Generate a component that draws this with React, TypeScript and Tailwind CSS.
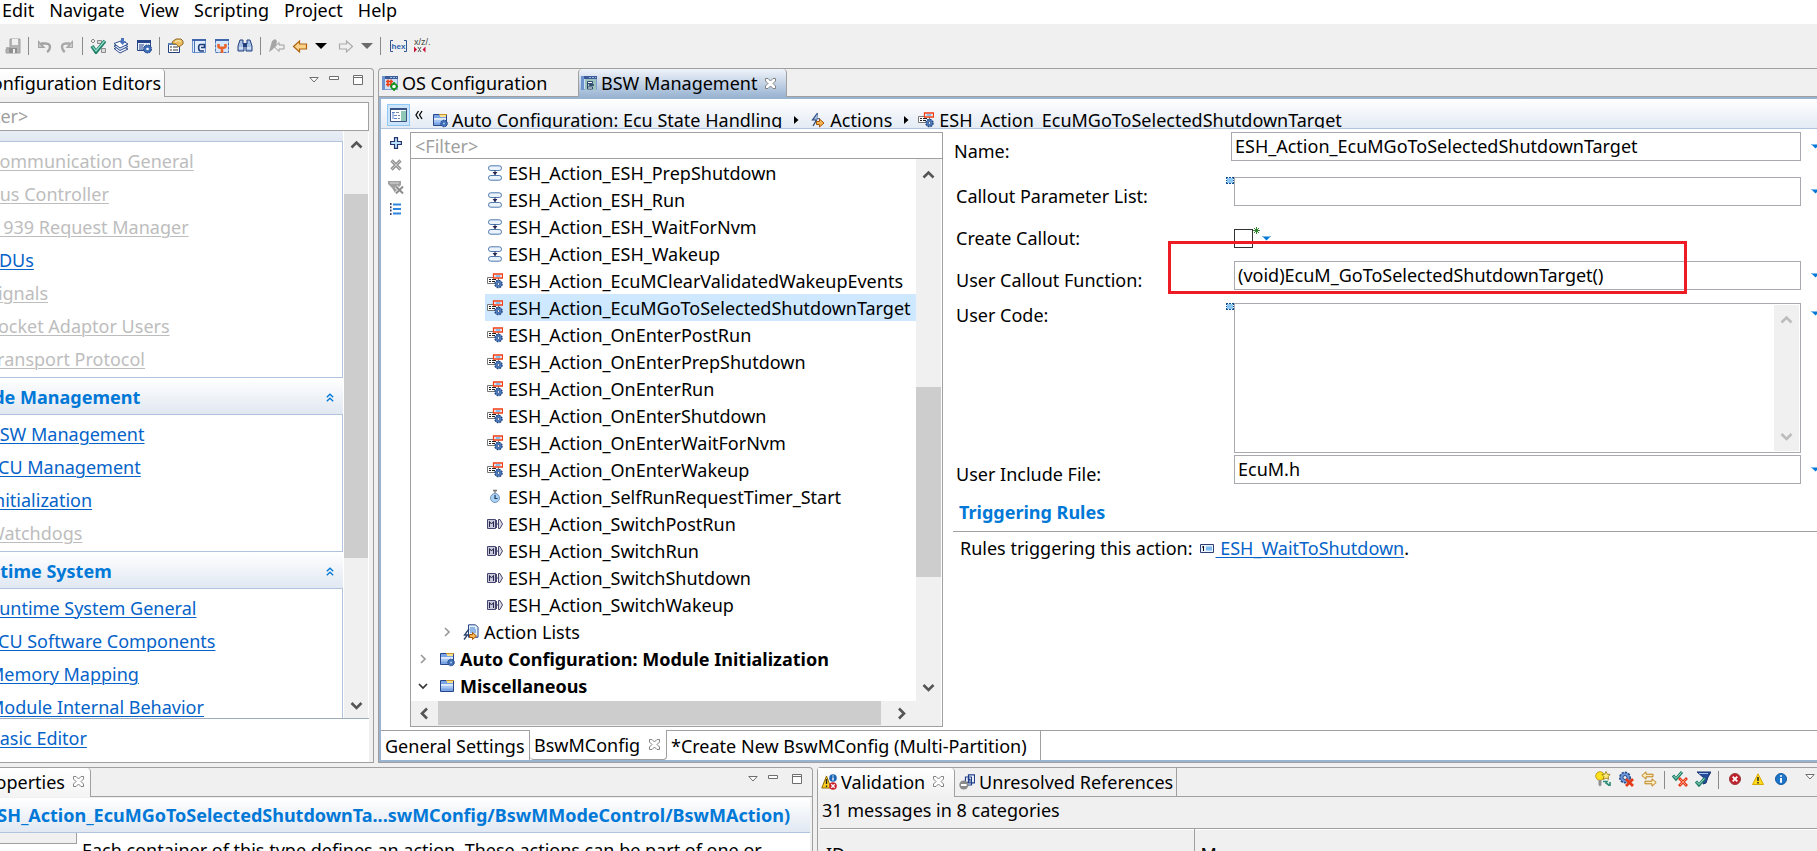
import type { ReactNode } from "react";

type IconProps = { className?: string };

function Svg({ children, className = "", w = 16, h = 16 }: { children: ReactNode; className?: string; w?: number; h?: number }) {
  return (
    <svg width={w} height={h} viewBox={`0 0 ${w} ${h}`} fill="none" className={"shrink-0 " + className} aria-hidden="true">
      {children}
    </svg>
  );
}

/* ---------- toolbar icons ---------- */

const SaveIcon = () => (
  <Svg>
    <path d="M5 1h10v14H1V9h4z" fill="#b4b4b4" />
    <path d="M5 1h10v14H1v-4h4z" stroke="#a0a0a0" />
    <path d="M7 1h6v6H7z" fill="#f0f0f0" />
    <path d="M4 10h8v5H4z" fill="#8f8f8f" />
    <path d="M8 11h2v4H8z" fill="#f0f0f0" />
  </Svg>
);

const UndoIcon = () => (
  <Svg>
    <path d="M5 5.500h5c4 0 4.500 3 3.500 5.500-.6 1.400-1.500 2.500-2.500 3" stroke="#a3a3a3" strokeWidth="2.400" />
    <path d="M2 2v8h7.500z" fill="#a3a3a3" />
    <path d="M3 5v4h3z" fill="#c9c9c9" />
  </Svg>
);

const RedoIcon = () => (
  <Svg>
    <path d="M11 5.500H6.500C3 5.500 2.500 8.500 3.500 11c.5 1.400 1.300 2.300 2.300 3" stroke="#a9a9a9" strokeWidth="2.400" />
    <path d="M14 2v8H6.500z" fill="#a9a9a9" />
    <path d="M13 5v4h-3z" fill="#cdcdcd" />
  </Svg>
);

const ValidateIcon = () => (
  <Svg>
    <path d="M3 1l2 2-2 2-2-2z" stroke="#888" fill="#eee" />
    <path d="M7.500 2.500h4v3h-4zM11.500 10.500h4v4h-4z" stroke="#8a8a8a" fill="#ddd" />
    <path d="M2 8l4 6 9-11" stroke="#1f7d68" strokeWidth="3.600" />
    <path d="M2.500 8.500l3.500 4.500 8.500-10" stroke="#8fe0c8" strokeWidth="1.200" />
  </Svg>
);

const LayersIcon = () => (
  <Svg>
    <path d="M1 10.500l6 4.500 8-4-6-3z" fill="#fff" stroke="#2b4a8b" />
    <path d="M1 8l6 4.500 8-4-6-3z" fill="#dbe6f7" stroke="#2b4a8b" />
    <path d="M1 5.500L7 10l8-4-6-3.500z" fill="#fff" stroke="#2b4a8b" />
    <path d="M8 0l3 0 0 3 2 0-3.500 4L6 3h2z" fill="#4b74bd" />
  </Svg>
);

const GenerateIcon = () => (
  <Svg>
    <path d="M1.500 2.500h13v10h-13z" fill="#e9f1fb" stroke="#27468a" />
    <path d="M1 2h14v3H1z" fill="#27468a" />
    <path d="M3 7h5M3 9h4M3 11h4" stroke="#27468a" />
    <circle cx="11.500" cy="11" r="4" fill="#3f6fb8" stroke="#1c3d7a" strokeDasharray="1.800 .9" />
    <circle cx="11.500" cy="11" r="1.300" fill="#fff" />
  </Svg>
);

const PropertiesIcon = () => (
  <Svg w={17}>
    <path d="M1.500 5.500h11v9h-11z" fill="#fff" stroke="#1f3f7a" />
    <path d="M1 5h12v2H1z" fill="#5f7fb8" />
    <path d="M3 9h2M3 12h2M6 9h5M6 12h5" stroke="#333" />
    <path d="M5 4l4-3h5l2 2v3l-4 3-3-3H6z" fill="#e9bd5e" stroke="#8f6a2a" />
    <path d="M8 4l3-1.500 3 1" stroke="#fff1c4" />
  </Svg>
);

const WindowRefreshIcon = () => (
  <Svg>
    <path d="M1.500 1.500h13v13h-13z" fill="#e3eefc" stroke="#6f93cf" />
    <path d="M1 1h14v2H1z" fill="#3f66ad" />
    <path d="M3.500 3v12" stroke="#4a72b8" />
    <path d="M14 6.500H9.500C7 6.500 7 13 9.500 13H13M10 9.500h3.500V6" stroke="#1f3f7a" strokeWidth="1.600" />
  </Svg>
);

const WindowToolIcon = () => (
  <Svg>
    <path d="M1.500 1.500h13v13h-13z" fill="#d6e6fb" stroke="#4a72b8" strokeDasharray="3 1" />
    <path d="M1 1h14v2H1z" fill="#3f66ad" />
    <path d="M4.500 6v2.500c0 2 7 2 7 0V6M8 10v5" stroke="#e8622a" strokeWidth="2.600" />
  </Svg>
);

const BinocularsIcon = () => (
  <Svg>
    <path d="M3 2h3v4l1 1v6H1V8zM10 2h3l2 6v5H9V7l1-1z" fill="#a8c0e6" stroke="#223f7c" />
    <path d="M6 5h4v4H6z" fill="#223f7c" />
    <path d="M2 10h4M10 10h4" stroke="#fff" />
  </Svg>
);

const LastEditIcon = () => (
  <Svg w={17}>
    <path d="M1 14L4 3l3-2 2 2-1 5-4 4z" fill="#a5a5a5" />
    <path d="M6.500 9l4.500-4.500v2.500h5v4h-5v2.500z" fill="#f0f0f0" stroke="#9c9c9c" />
  </Svg>
);

const BackIcon = () => (
  <Svg>
    <path d="M1.500 8.500L7.500 3v3h7v5h-7v3z" fill="#fbd28a" stroke="#b0620e" strokeWidth="1.200" />
  </Svg>
);

const ForwardIcon = () => (
  <Svg>
    <path d="M14.500 8.500L8.500 3v3h-7v5h7v3z" fill="#f0f0f0" stroke="#ababab" strokeWidth="1.200" />
  </Svg>
);

const CaretDown = ({ className = "" }: IconProps) => (
  <Svg w={12} h={6} className={className}>
    <path d="M0 0h12L6 6z" fill="currentColor" />
  </Svg>
);

const HexIcon = () => (
  <Svg w={17}>
    <path d="M3 2.500H.5v11H3M14 2.500h2.500v11H14" stroke="#33558f" />
    <text x="8.500" y="11" textAnchor="middle" fontSize="8" fontWeight="700" fontFamily="Liberation Sans, sans-serif" fill="#2e62ab">hex</text>
  </Svg>
);

const ShortNameIcon = () => (
  <Svg w={17}>
    <text x="0" y="7" fontSize="9" fontFamily="Liberation Sans, sans-serif" fill="#444">x/z/..</text>
    <path d="M0 8.500v6l3-3zM11.500 8.500v6l-3-3z" fill="#d0103a" />
    <path d="M4 9l3 5M7 9l-3 5" stroke="#555" />
  </Svg>
);

/* ---------- window chrome icons ---------- */

const ViewMenuIcon = () => (
  <Svg w={10} h={6}>
    <path d="M.8.500h8.400L5 5z" fill="#fff" stroke="#6e6e6e" />
  </Svg>
);
const MinimizeIcon = () => (
  <Svg w={10} h={4}>
    <path d="M.5.500h9v3h-9z" fill="#fff" stroke="#6e6e6e" />
  </Svg>
);
const MaximizeIcon = () => (
  <Svg w={10} h={10}>
    <path d="M.5.500h9v9h-9zM0 2.500h10" fill="#fff" stroke="#6e6e6e" />
  </Svg>
);
const CloseX = () => (
  <Svg w={11} h={11}>
    <path
      d="M.5.500h2.500l2.500 2.500L8 .5h2.500V3L8 5.500 10.500 8v2.500H8L5.500 8 3 10.500H.5V8L3 5.500.5 3z"
      fill="#fff"
      stroke="#777"
      strokeWidth=".9"
    />
  </Svg>
);

/* ---------- editor icons ---------- */

const OsIcon = () => (
  <Svg>
    <path d="M.5 1.500h15v13H.5z" fill="#cfdff5" stroke="#7f9fd2" />
    <path d="M0 1h16v3H0z" fill="#3b5b98" />
    <path d="M8 2.500h7" stroke="#9db9e6" strokeDasharray="2 1" />
    <path d="M0 1h3v14H0z" fill="#6f93cf" />
    <path d="M6 4.500v7M9 4.500v7M4 6.500h7M4 9.500h7" stroke="#f0390f" strokeWidth="1.500" />
    <circle cx="12" cy="11.500" r="2.600" stroke="#13931a" strokeWidth="1.600" fill="#fff" />
    <path d="M12 7v2M12 14v2M8 11.500h2M14.500 11.500h1.500" stroke="#13931a" strokeWidth="1.600" />
  </Svg>
);

const BswIcon = () => (
  <Svg>
    <path d="M.5 1.500h15v13H.5z" fill="#cfdff5" stroke="#7f9fd2" />
    <path d="M0 1h16v3H0z" fill="#3b5b98" />
    <path d="M8 2.500h7" stroke="#9db9e6" strokeDasharray="2 1" />
    <path d="M0 1h3v14H0z" fill="#6f93cf" />
    <path d="M4 4h11v11H4z" fill="#9cc3bd" />
    <path d="M6.500 6.500h5v2h-5zM8.500 9.500h4v1h-4zM6.500 12h5v2h-5zM6.500 8v5" fill="#fff" stroke="#203a63" strokeWidth=".9" />
  </Svg>
);

const OutlineIcon = () => (
  <Svg w={17} h={16}>
    <path d="M.5 1.500h16v13H.5z" fill="#fff" stroke="#3a5488" />
    <path d="M0 1h17v2H0z" fill="#3a5488" />
    <path d="M11 4h5v10h-5z" fill="#8fc9b5" />
    <path d="M2 5.500h3M4 8.500h3M4 11.500h3M3 6v6" stroke="#5d86c9" />
    <path d="M6 5.500h3M8 8.500h2M8 11.500h2" stroke="#7a8aa8" />
  </Svg>
);

const FolderIcon = ({ gear = true }: { gear?: boolean }) => (
  <Svg>
    <path d="M1.500 2.500h13v11h-13z" fill="#7ba4e4" stroke="#27468a" />
    <path d="M8 3h6v2H8z" fill="#fbe08a" />
    <path d="M7 2.500h8" stroke="#c9952a" />
    <path d="M2 6h12v2.500H2z" fill="#dbe9fb" />
    <path d="M2 8.500h12v2H2z" fill="#a5c5f2" />
    {gear && <circle cx="12" cy="11.500" r="3.300" fill="#3f6fb8" stroke="#1c3d7a" strokeDasharray="1.500 .8" />}
    {gear && <circle cx="12" cy="11.500" r="1" fill="#a9c8f0" />}
  </Svg>
);

const ActionsIcon = () => (
  <Svg w={14}>
    <path d="M6.500 1L1.500 8h4L2 14" stroke="#27406e" strokeWidth="1.200" />
    <path d="M2.500 7.500l4-6-.5 5h3z" fill="#c9dbf3" stroke="#3a5c96" strokeWidth=".7" />
    <path d="M5.500 9.500H8.500V7l4.500 4-4.500 4v-2.500H5.500z" fill="#f9b552" stroke="#a2560b" />
  </Svg>
);

const CalloutIcon = () => (
  <Svg>
    <path d="M.5 4.500h11v6H.5z" fill="#fff" stroke="#777" />
    <path d="M2 6.500h2M5 6.500h4M2 8.500h2M5 8.500h3" stroke="#222" />
    <path d="M6.500 1h9v4h-9z" fill="#fff" stroke="#f03c14" strokeWidth="1.300" />
    <path d="M8.500 3h5" stroke="#1c7fd6" />
    <circle cx="11.500" cy="11" r="3.600" fill="#4f7fc4" stroke="#24467f" strokeDasharray="1.800 1" strokeWidth="1.400" />
    <circle cx="11.500" cy="11" r="1.300" fill="#fff" stroke="#24467f" strokeWidth=".8" />
  </Svg>
);

const FlowIcon = () => (
  <Svg>
    <rect x="1.500" y=".8" width="13" height="4.700" rx="2.300" fill="#eaf3fc" stroke="#4f79ad" />
    <rect x="1.500" y="10.500" width="13" height="4.700" rx="2.300" fill="#eaf3fc" stroke="#4f79ad" />
    <path d="M8 5.500V10" stroke="#23234f" />
    <path d="M5.500 7h5L8 10z" fill="#23234f" />
  </Svg>
);

const TimerIcon = () => (
  <Svg>
    <path d="M6 1.500h4M8 2v2" stroke="#777" strokeWidth="1.300" />
    <circle cx="8" cy="9" r="4.500" fill="#a9d2f5" stroke="#7795b8" />
    <path d="M8 6v3.500h2.500" stroke="#1c3457" strokeWidth="1.200" />
  </Svg>
);

const ModeIcon = () => (
  <Svg>
    <path d="M.5 3.500h8v9h-8z" fill="#c9c9dc" stroke="#45456e" />
    <path d="M2.500 11V5.500l2 2.500 2-2.500V11" stroke="#26264d" />
    <path d="M11.500 3.500h1.500l2.500 4.500-2.500 4.500h-1.500z" fill="#dcdce8" stroke="#45456e" />
    <path d="M9 8h2.500M9.500 4v8" stroke="#45456e" />
  </Svg>
);

const ActionListIcon = () => (
  <Svg>
    <path d="M5.500.8h7l2.500 2.500v10H5.500z" fill="#e4effb" stroke="#27468a" />
    <path d="M7 4h5M7 6h6M7 8h6" stroke="#3d7fd0" />
    <path d="M6 5L1.500 11h3L1 15.500" stroke="#27406e" strokeWidth="1.300" />
    <path d="M6.500 10.500H9.500V8.500l4 3.500-4 3.500v-2h-3z" fill="#f9b552" stroke="#a2560b" />
  </Svg>
);

const RuleIcon = () => (
  <Svg w={14} h={9}>
    <path d="M.5.500h13v8H.5z" fill="#eaf3fc" stroke="#2f3f73" />
    <path d="M3.500 2v5M2 3h1" stroke="#111" />
    <path d="M6 2.500h6v4H6z" fill="#7dbcf0" />
  </Svg>
);

const AddIcon = () => (
  <Svg w={12} h={12}>
    <path d="M4.500.6h3v3.900h3.900v3H7.500v3.900h-3V7.500H.6v-3h3.900z" fill="#b9e2fb" stroke="#27346e" strokeWidth="1.200" />
  </Svg>
);
const DeleteIcon = () => (
  <Svg w={12} h={12}>
    <path d="M1.500 1.500l9 9M10.500 1.500l-9 9" stroke="#979797" strokeWidth="3.200" />
    <path d="M2 2l8 8M10 2l-8 8" stroke="#cfcfcf" strokeWidth=".9" />
  </Svg>
);
const FilterOffIcon = () => (
  <Svg w={16} h={13}>
    <path d="M0 0h13v4l-3 3v5H7L4 7 0 3z" fill="#a0a0a0" />
    <path d="M2 2h9" stroke="#ddd" />
    <path d="M8 5.500l7 7M15 5.500l-7 7" stroke="#fff" strokeWidth="3.400" />
    <path d="M8 5.500l7 7M15 5.500l-7 7" stroke="#8d8d8d" strokeWidth="2" />
  </Svg>
);
const ListIcon = () => (
  <Svg w={11} h={12}>
    <path d="M3 1.500h8M3 6h8M3 10.500h8" stroke="#2e86de" strokeWidth="2" />
    <path d="M.8 0v12" stroke="#2c2c5e" strokeDasharray="2 1.300" strokeWidth="1.400" />
  </Svg>
);

const FieldCaret = ({ className = "" }: IconProps) => (
  <Svg w={9} h={5} className={className}>
    <path d="M.5.500h8L4.500 4.500z" fill="#0078d7" />
    <path d="M0 .5h9" stroke="#7db9ea" />
  </Svg>
);

const InfoMarker = () => (
  <Svg w={8} h={7}>
    <path d="M1 1h6v5H1z" fill="#8cc6f2" />
    <path d="M0 .5h2M3 .5h2M6 .5h2M0 6.500h2M3 6.500h2M6 6.500h2M.5 0v2M.5 3v1M.5 5v2M7.500 0v2M7.500 3v1M7.500 5v2" stroke="#0f4c8c" />
  </Svg>
);

/* ---------- validation icons ---------- */

const ValidationIcon = () => (
  <Svg>
    <path d="M5.500 2L10 14H.8z" fill="#ffd21f" stroke="#8c6a00" />
    <path d="M5.500 5v5M5.500 11.500v1.500" stroke="#222" strokeWidth="1.400" />
    <circle cx="12" cy="4" r="3.800" fill="#1c66b5" />
    <path d="M12 1.500v1M12 3.500v3" stroke="#fff" strokeWidth="1.400" />
    <circle cx="12" cy="12" r="3.800" fill="#c8202b" />
    <path d="M10.300 10.300l3.400 3.400M13.700 10.300l-3.400 3.400" stroke="#fff" strokeWidth="1.300" />
  </Svg>
);
const UnresolvedIcon = () => (
  <Svg>
    <path d="M9.500.800h6v8h-6zM6.500 3h6v8h-6z" fill="#fff" stroke="#1f3f8a" strokeWidth="1.200" />
    <path d="M8 9l3-4M8.500 5h2.500v3" stroke="#1f3f8a" />
    <circle cx="4.800" cy="11" r="4.500" fill="#8a8a8a" />
    <path d="M2 11h5.600" stroke="#fff" strokeWidth="2" />
  </Svg>
);
const BulbIcon = () => (
  <Svg>
    <circle cx="5" cy="5" r="4.300" fill="#ffe21f" stroke="#b08a00" strokeWidth=".8" />
    <path d="M3.500 9h3v5l-1.500 1.500L3.500 14z" fill="#8f8f8f" />
    <path d="M11 .5l1.300 2.700 2.900.3-2.100 2 .5 2.900L11 7 8.300 8.400l.5-2.900-2-2 2.900-.3z" fill="#ffe97a" stroke="#96760f" strokeWidth=".8" />
    <path d="M8 10.500h4l-1 1.500 3.500 2.500M15 15v-4" stroke="#2d8c78" strokeWidth="1.600" />
  </Svg>
);
const GearErrorIcon = () => (
  <Svg>
    <circle cx="7" cy="6.500" r="5.200" fill="#6c95d6" stroke="#274a87" strokeWidth="1.600" strokeDasharray="2.200 1.200" />
    <circle cx="7" cy="6.500" r="2" fill="#f0f0f0" stroke="#274a87" />
    <path d="M8 8l7 7M15 8l-7 7" stroke="#e43a17" strokeWidth="2.800" />
  </Svg>
);
const SwapIcon = () => (
  <Svg>
    <path d="M.8 4.500L5 .8v2.400h7v2.600H5v2.400zM15.200 11.500L11 7.800v2.400H4v2.600h7v2.400z" fill="#fdebc0" stroke="#bd8119" />
  </Svg>
);
const CheckErrorIcon = () => (
  <Svg>
    <path d="M1 4.500l3 3.500 6-7" stroke="#1f7d68" strokeWidth="3" />
    <path d="M1.500 5l2.500 2.500 5.500-6" stroke="#a6ebd6" />
    <path d="M7 7l8 8M15 7l-8 8" stroke="#e43a17" strokeWidth="2.800" />
    <path d="M8 8l6 6M14 8l-6 6" stroke="#ffb199" strokeWidth=".8" />
  </Svg>
);
const FilterCheckIcon = () => (
  <Svg>
    <path d="M2 1h14l-3 5-2 6-3 1 1-6z" fill="#254c9c" stroke="#16336f" />
    <path d="M4 2.500h9" stroke="#a6c4f2" />
    <path d="M1 10.500l3 3.500 6-7" stroke="#1f7d68" strokeWidth="3" />
    <path d="M1.500 11l2.500 2.500 5.500-6" stroke="#a6ebd6" />
  </Svg>
);
const ErrorIcon = () => (
  <Svg w={12} h={12}>
    <circle cx="6" cy="6" r="5.500" fill="#c0202c" stroke="#9c3a40" />
    <path d="M3.700 3.700l4.600 4.600M8.300 3.700L3.700 8.300" stroke="#fff" strokeWidth="1.900" />
  </Svg>
);
const WarningIcon = () => (
  <Svg w={12} h={12}>
    <path d="M6 .8l5.500 10.700H.5z" fill="#ffdc1e" stroke="#d8a900" />
    <path d="M6 4v4M6 9v1.500" stroke="#222" strokeWidth="1.500" />
  </Svg>
);
const InfoIcon = () => (
  <Svg w={12} h={12}>
    <circle cx="6" cy="6" r="5.500" fill="#1c75c8" stroke="#155a9c" />
    <path d="M6 2.300v1.500M6 5v4.700" stroke="#fff" strokeWidth="1.900" />
  </Svg>
);

/* ---------- shared pieces ---------- */

const Chevron = ({ dir, className = "" }: { dir: "up" | "down" | "left" | "right"; className?: string }) => {
  const d = {
    up: "M1.500 9.500L6.500 4.500l5 5",
    down: "M1.500 4L6.500 9l5-5",
    left: "M9 1.500L4 6.500l5 5",
    right: "M4 1.500L9 6.500l-5 5",
  }[dir];
  return (
    <Svg w={13} h={13} className={className}>
      <path d={d} stroke="currentColor" strokeWidth="2.600" />
    </Svg>
  );
};

const TreeChevron = ({ open }: { open: boolean }) => (
  <Svg w={10} h={10} className={open ? "text-[#333]" : "text-[#9a9a9a]"}>
    <path d={open ? "M1 3l4 4 4-4" : "M3 1l4 4-4 4"} stroke="currentColor" strokeWidth="1.700" />
  </Svg>
);

const CollapseIcon = () => (
  <Svg w={8} h={9}>
    <path d="M.8 4.300L4 1.200l3.200 3.100M.8 8.300L4 5.200l3.200 3.100" stroke="#0078d7" strokeWidth="1.300" />
  </Svg>
);

const Divider = () => <span className="h-[18px] w-px bg-[#8a8a8a]" />;

function IconButton({ label, children, className = "" }: { label: string; children: ReactNode; className?: string }) {
  return (
    <button type="button" aria-label={label} className={"flex shrink-0 items-center justify-center " + className}>
      {children}
    </button>
  );
}

function WindowButtons() {
  return (
    <div className="flex items-start gap-[10px] pt-[5px] pr-[10px]">
      <IconButton label="View menu" className="h-3"><ViewMenuIcon /></IconButton>
      <IconButton label="Minimize" className="h-2"><MinimizeIcon /></IconButton>
      <IconButton label="Maximize" className="ml-1 h-3"><MaximizeIcon /></IconButton>
    </div>
  );
}

/* ---------- menu and toolbar ---------- */

function MenuBar() {
  return (
    <nav className="flex h-6 items-start gap-[15px] bg-white pl-[2px] leading-5">
      {["Edit", "Navigate", "View", "Scripting", "Project", "Help"].map((m) => (
        <button key={m} type="button">{m}</button>
      ))}
    </nav>
  );
}

function ToolBar() {
  return (
    <div className="flex h-[44px] items-center gap-[7px] pl-[5px]">
      <IconButton label="Save"><SaveIcon /></IconButton>
      <Divider />
      <IconButton label="Undo"><UndoIcon /></IconButton>
      <IconButton label="Redo"><RedoIcon /></IconButton>
      <Divider />
      <IconButton label="Validate"><ValidateIcon /></IconButton>
      <IconButton label="Import"><LayersIcon /></IconButton>
      <IconButton label="Generate"><GenerateIcon /></IconButton>
      <Divider />
      <IconButton label="Properties"><PropertiesIcon /></IconButton>
      <IconButton label="Refresh window"><WindowRefreshIcon /></IconButton>
      <IconButton label="Window tools"><WindowToolIcon /></IconButton>
      <IconButton label="Find"><BinocularsIcon /></IconButton>
      <Divider />
      <IconButton label="Last edit location"><LastEditIcon /></IconButton>
      <IconButton label="Back"><BackIcon /></IconButton>
      <IconButton label="Back history"><CaretDown className="text-black" /></IconButton>
      <IconButton label="Forward" className="ml-1"><ForwardIcon /></IconButton>
      <IconButton label="Forward history"><CaretDown className="text-[#6b6b6b]" /></IconButton>
      <Divider />
      <IconButton label="Hexadecimal display" className="ml-[2px]"><HexIcon /></IconButton>
      <IconButton label="Short names"><ShortNameIcon /></IconButton>
    </div>
  );
}

/* ---------- configuration editors ---------- */

type NavItem = { label: string; off?: boolean };
const sections: { title: string; items: NavItem[] }[] = [
  {
    title: "Communication",
    items: [
      { label: "Communication General", off: true },
      { label: "Bus Controller", off: true },
      { label: "J1939 Request Manager", off: true },
      { label: "PDUs" },
      { label: "Signals", off: true },
      { label: "Socket Adaptor Users", off: true },
      { label: "Transport Protocol", off: true },
    ],
  },
  {
    title: "Mode Management",
    items: [{ label: "BSW Management" }, { label: "ECU Management" }, { label: "Initialization" }, { label: "Watchdogs", off: true }],
  },
  {
    title: "Runtime System",
    items: [
      { label: "Runtime System General" },
      { label: "ECU Software Components" },
      { label: "Memory Mapping" },
      { label: "Module Internal Behavior" },
    ],
  },
];

function NavSection({ title, items }: { title: string; items: NavItem[] }) {
  return (
    <section>
      <h2 className="flex h-[37px] items-center justify-between border-b border-[#b0c4de] bg-linear-to-b from-white to-[#e1e8f2] pt-[2px] pr-[9px] font-bold text-[#0078d7]">
        <span className="-ml-[35px]">{title}</span>
        <button type="button" aria-label={"Collapse " + title}><CollapseIcon /></button>
      </h2>
      <ul className="border-r border-b border-[#b0c4de] pt-1">
        {items.map((i) => (
          <li key={i.label} className="-ml-[12px] h-[33px] leading-[31px]">
            <a
              href="#"
              className={i.off ? "text-[#bdbdbd] underline decoration-1 underline-offset-2" : "text-[#0563c9] underline decoration-1 underline-offset-2"}
            >
              {i.label}
            </a>
          </li>
        ))}
      </ul>
    </section>
  );
}

function ConfigurationEditors() {
  return (
    <section className="flex w-[374px] shrink-0 flex-col rounded-tr border-t border-r border-b border-[#a0a0a0]">
      <div className="flex h-7 items-stretch justify-between">
        <div className="flex w-[165px] items-center justify-end rounded-tr border-r border-[#a0a0a0] bg-linear-to-b from-white to-[#f4f4f4] pr-[3px]">
          <button type="button" className="whitespace-nowrap">Configuration Editors</button>
        </div>
        <div className="flex flex-1 justify-end border-b border-[#a0a0a0]"><WindowButtons /></div>
      </div>
      <div className="flex min-h-0 flex-1 flex-col pt-[5px] pr-1">
        <div className="flex h-[29px] shrink-0 overflow-hidden border-y border-r border-[#a0a0a0] bg-white">
          <input aria-label="Filter" placeholder="<Filter>" className="-ml-[35px] w-full pb-px outline-none placeholder:text-[#a0a0a0]" />
        </div>
        <div className="flex min-h-0 flex-1 border-b border-[#9eabbb] bg-white pr-px">
          <div className="flex min-h-0 flex-1 flex-col justify-start overflow-hidden">
            <div className="-mt-[26px]">
              {sections.map((s) => <NavSection key={s.title} {...s} />)}
            </div>
          </div>
          <div className="ml-px flex w-6 flex-col bg-[#f0f0f0] text-[#555]">
            <IconButton label="Scroll up" className="h-[26px]"><Chevron dir="up" /></IconButton>
            <div className="flex flex-1 flex-col">
              <div className="flex-[37]" />
              <div className="flex-[365] bg-[#cdcdcd]" />
              <div className="flex-[135]" />
            </div>
            <IconButton label="Scroll down" className="h-[26px]"><Chevron dir="down" /></IconButton>
          </div>
        </div>
        <div className="h-[43px] shrink-0 bg-white pt-[3px] leading-[33px]">
          <a href="#" className="-ml-[12px] text-[#0563c9] underline decoration-1 underline-offset-2">Basic Editor</a>
        </div>
      </div>
    </section>
  );
}

/* ---------- BSW editor: tree ---------- */

type Leaf = { label: string; icon: "flow" | "callout" | "timer" | "mode"; selected?: boolean };
const leaves: Leaf[] = [
  { label: "ESH_Action_ESH_PrepShutdown", icon: "flow" },
  { label: "ESH_Action_ESH_Run", icon: "flow" },
  { label: "ESH_Action_ESH_WaitForNvm", icon: "flow" },
  { label: "ESH_Action_ESH_Wakeup", icon: "flow" },
  { label: "ESH_Action_EcuMClearValidatedWakeupEvents", icon: "callout" },
  { label: "ESH_Action_EcuMGoToSelectedShutdownTarget", icon: "callout", selected: true },
  { label: "ESH_Action_OnEnterPostRun", icon: "callout" },
  { label: "ESH_Action_OnEnterPrepShutdown", icon: "callout" },
  { label: "ESH_Action_OnEnterRun", icon: "callout" },
  { label: "ESH_Action_OnEnterShutdown", icon: "callout" },
  { label: "ESH_Action_OnEnterWaitForNvm", icon: "callout" },
  { label: "ESH_Action_OnEnterWakeup", icon: "callout" },
  { label: "ESH_Action_SelfRunRequestTimer_Start", icon: "timer" },
  { label: "ESH_Action_SwitchPostRun", icon: "mode" },
  { label: "ESH_Action_SwitchRun", icon: "mode" },
  { label: "ESH_Action_SwitchShutdown", icon: "mode" },
  { label: "ESH_Action_SwitchWakeup", icon: "mode" },
];
const leafIcons = { flow: <FlowIcon />, callout: <CalloutIcon />, timer: <TimerIcon />, mode: <ModeIcon /> };

function ActionTree() {
  return (
    <div className="flex w-[533px] shrink-0 flex-col border border-[#a0a0a0]">
      <input
        aria-label="Filter actions"
        placeholder="<Filter>"
        className="h-[26px] w-full shrink-0 border-b border-[#a0a0a0] bg-white px-1 outline-none placeholder:text-[#a0a0a0]"
      />
      <div className="flex min-h-0 flex-1 pr-px">
        <div className="flex min-w-0 flex-1 flex-col">
          <ul role="tree" aria-label="Actions" className="min-h-0 flex-1 overflow-hidden whitespace-nowrap">
            {leaves.map((l) => (
              <li
                key={l.label}
                role="treeitem"
                aria-selected={!!l.selected}
                className={
                  l.selected
                    ? "ml-[74px] flex h-[27px] items-center gap-[5px] overflow-hidden bg-[#cde8ff] pl-[2px]"
                    : "ml-[74px] flex h-[27px] items-center gap-[5px] overflow-hidden pl-[2px]"
                }
              >
                {leafIcons[l.icon]}
                {l.label}
              </li>
            ))}
            <li role="treeitem" aria-expanded="false" className="ml-[31px] flex h-[27px] items-center">
              <TreeChevron open={false} />
              <span className="ml-[11px] flex items-center gap-[5px]"><ActionListIcon />Action Lists</span>
            </li>
            <li role="treeitem" aria-expanded="false" className="ml-[7px] flex h-[27px] items-center font-bold">
              <TreeChevron open={false} />
              <span className="ml-[11px] flex items-center gap-[5px]"><FolderIcon />Auto Configuration: Module Initialization</span>
            </li>
            <li role="treeitem" aria-expanded="true" className="ml-[7px] flex h-[27px] items-center font-bold">
              <TreeChevron open />
              <span className="ml-[11px] flex items-center gap-[5px]"><FolderIcon gear={false} />Miscellaneous</span>
            </li>
          </ul>
          <div className="flex h-[25px] shrink-0 bg-[#f0f0f0] pb-px text-[#555]">
            <IconButton label="Scroll left" className="w-[27px]"><Chevron dir="left" /></IconButton>
            <div className="flex-1 bg-[#cdcdcd]" />
            <IconButton label="Scroll right" className="w-[35px] pl-[6px]"><Chevron dir="right" /></IconButton>
          </div>
        </div>
        <div className="flex w-[25px] flex-col bg-[#f0f0f0] pb-[25px] text-[#555]">
          <IconButton label="Scroll up" className="h-[28px] pt-[2px]"><Chevron dir="up" /></IconButton>
          <div className="flex flex-1 flex-col">
            <div className="flex-[200]" />
            <div className="flex-[191] bg-[#cdcdcd]" />
            <div className="flex-[97]" />
          </div>
          <IconButton label="Scroll down" className="h-[27px]"><Chevron dir="down" /></IconButton>
        </div>
      </div>
    </div>
  );
}

/* ---------- BSW editor: form ---------- */

const inputClass = "h-[29px] min-w-0 flex-1 border border-[#a9a9b0] bg-white px-[3px] pb-[2px] outline-none";

function FieldRow({ id, label, marker, wide, children, className }: { id: string; label: string; marker?: boolean; wide?: boolean; children: ReactNode; className: string }) {
  return (
    <div className={"flex items-start " + className}>
      <label htmlFor={id} className={wide ? "w-[277px] shrink-0 pt-[7px]" : "ml-[2px] w-[278px] shrink-0 pt-[7px]"}>
        {label}
      </label>
      <div className="relative flex min-w-0 flex-1">
        {marker && <span className="absolute top-0 -left-2"><InfoMarker /></span>}
        {children}
      </div>
      <button type="button" aria-label={label + " menu"} className="w-4 shrink-0 overflow-hidden pt-3 pl-[10px]">
        <FieldCaret />
      </button>
    </div>
  );
}

function ActionForm() {
  return (
    <form className="relative min-w-0 flex-1 pl-[11px]">
      <FieldRow id="name" label="Name:" wide className="mb-4 h-[29px]">
        <input id="name" className={inputClass} defaultValue="ESH_Action_EcuMGoToSelectedShutdownTarget" />
      </FieldRow>
      <FieldRow id="params" label="Callout Parameter List:" marker className="mb-5 h-[29px]">
        <input id="params" className={inputClass} />
      </FieldRow>
      <div className="mb-[11px] ml-[2px] flex h-6 items-center">
        <label htmlFor="create" className="w-[278px] shrink-0">Create Callout:</label>
        <input id="create" type="checkbox" className="size-[19px] shrink-0 appearance-none border border-[#333] bg-white" />
        <span className="h-full w-[8px] text-[#1a7a1a]">
          <Svg w={7} h={9}><path d="M3.500 1v7M0 4.500h7M1 2l5 5M6 2L1 7" stroke="currentColor" strokeWidth=".9" /></Svg>
        </span>
        <button type="button" aria-label="Create Callout menu" className="ml-px"><FieldCaret /></button>
      </div>
      <FieldRow id="fn" label="User Callout Function:" className="mb-[13px] h-[29px]">
        <input id="fn" className={inputClass} defaultValue="(void)EcuM_GoToSelectedShutdownTarget()" />
      </FieldRow>
      <div className="mb-[2px] ml-[2px] flex h-[150px] items-start">
        <label htmlFor="code" className="w-[278px] shrink-0">User Code:</label>
        <div className="relative flex h-full min-w-0 flex-1 border border-[#a9a9b0] p-px">
          <span className="absolute -top-px -left-[9px]"><InfoMarker /></span>
          <textarea id="code" className="min-w-0 flex-1 resize-none outline-none" />
          <div className="flex w-[25px] flex-col justify-between bg-[#f0f0f0] py-2 text-[#bcbcbc]">
            <IconButton label="Scroll code up"><Chevron dir="up" /></IconButton>
            <IconButton label="Scroll code down"><Chevron dir="down" /></IconButton>
          </div>
        </div>
        <button type="button" aria-label="User Code menu" className="w-4 shrink-0 overflow-hidden pt-2 pl-[10px]"><FieldCaret /></button>
      </div>
      <FieldRow id="include" label="User Include File:" className="mb-4 h-[29px]">
        <input id="include" className={inputClass} defaultValue="EcuM.h" />
      </FieldRow>
      <h3 className="-ml-px border-b border-[#a0a0a0] pb-[7px] pl-[6px] font-bold text-[#0078d7]">Triggering Rules</h3>
      <p className="mt-1 flex items-center pl-[6px] whitespace-pre">
        Rules triggering this action:<span className="mr-[2px] ml-[7px]"><RuleIcon /></span>
        <a href="#" className="text-[#0563c9] underline decoration-1 underline-offset-2">{" ESH_WaitToShutdown"}</a>.
      </p>
      <div className="pointer-events-none absolute top-[109px] right-[130px] left-[225px] h-[53px] border-[3px] border-[#ed1c24]" />
    </form>
  );
}

function BswEditor() {
  return (
    <section className="flex min-w-0 flex-1 flex-col rounded-tl border-t border-b border-l border-[#a0a0a0]">
      <div className="flex h-7 items-stretch">
        <button type="button" className="flex w-[199px] items-center gap-[4px] border-b border-[#a0a0a0] pl-[3px]"><OsIcon />OS Configuration</button>
        <div className="flex w-[209px] items-center rounded-t border-x border-[#a0a0a0] bg-linear-to-b from-[#f0f4fa] to-[#9ab4d2] pl-[2px]">
          <button type="button" className="flex items-center gap-[4px]"><BswIcon />BSW Management</button>
          <IconButton label="Close BSW Management" className="ml-2"><CloseX /></IconButton>
        </div>
        <div className="flex-1 border-b border-[#a0a0a0]" />
      </div>
      <div className="flex min-h-0 flex-1 flex-col border-t-2 border-b-2 border-l-2 border-[#99b4d1] bg-white">
        <div className="flex h-[30px] shrink-0 items-end overflow-hidden border-b border-[#b0c4de] bg-linear-to-b from-white to-[#e4ebf4] pl-[6px]">
          <div className="flex items-center self-start pt-[5px]">
            <IconButton label="Toggle outline" className="h-[22px] w-[23px] border border-[#90c8f6] bg-[#cce4f9]"><OutlineIcon /></IconButton>
            <IconButton label="Show hidden levels" className="ml-[5px]">
              <Svg w={8} h={10}><path d="M3.500 1L1 5l2.500 4M7 1L4.500 5 7 9" stroke="#000" strokeWidth="1.300" /></Svg>
            </IconButton>
          </div>
          <nav aria-label="Breadcrumb" className="ml-[9px] flex h-6 items-center pt-[7px] whitespace-nowrap">
            <FolderIcon />
            <button type="button" className="ml-1">Auto Configuration: Ecu State Handling</button>
            <Svg w={5} h={8} className="mx-3"><path d="M0 0v8l4.500-4z" fill="#000" /></Svg>
            <ActionsIcon />
            <button type="button" className="ml-[5px]">Actions</button>
            <Svg w={5} h={8} className="mr-[9px] ml-3"><path d="M0 0v8l4.500-4z" fill="#000" /></Svg>
            <CalloutIcon />
            <button type="button" className="ml-[5px]">ESH_Action_EcuMGoToSelectedShutdownTarget</button>
          </nav>
        </div>
        <div className="flex min-h-0 flex-1 pt-[3px]">
          <div className="flex w-[29px] shrink-0 flex-col items-center gap-[10px] pt-[5px]">
            <IconButton label="Add" className="h-3"><AddIcon /></IconButton>
            <IconButton label="Delete" className="h-3"><DeleteIcon /></IconButton>
            <IconButton label="Clear filter" className="h-3"><FilterOffIcon /></IconButton>
            <IconButton label="Show list" className="h-3"><ListIcon /></IconButton>
          </div>
          <ActionTree />
          <ActionForm />
        </div>
        <div className="mt-[3px] flex h-[30px] shrink-0 items-stretch">
          <button type="button" className="w-[149px] border-t border-r border-[#a0a0a0] pl-1 text-left whitespace-nowrap">General Settings</button>
          <div className="flex w-[137px] items-center justify-between rounded-b border-r border-b border-[#a0a0a0] pr-[6px] pl-1">
            <button type="button">BswMConfig</button>
            <IconButton label="Close BswMConfig"><CloseX /></IconButton>
          </div>
          <button type="button" className="w-[374px] border-t border-r border-[#a0a0a0] pl-1 text-left whitespace-nowrap">*Create New BswMConfig (Multi-Partition)</button>
          <div className="flex-1 border-t border-[#a0a0a0]" />
        </div>
      </div>
    </section>
  );
}

/* ---------- bottom panels ---------- */

function PropertiesPanel() {
  return (
    <section className="flex w-[813px] shrink-0 flex-col rounded-tr border-t border-r border-[#a0a0a0]">
      <div className="flex h-[29px] shrink-0 items-stretch">
        <div className="flex w-[91px] items-center justify-end gap-2 rounded-tr border-r border-[#a0a0a0] bg-linear-to-b from-white to-[#f4f4f4] pr-[6px] pb-[2px]">
          <button type="button">Properties</button>
          <IconButton label="Close Properties"><CloseX /></IconButton>
        </div>
        <div className="flex flex-1 justify-end border-b border-[#a0a0a0]"><WindowButtons /></div>
      </div>
      <div className="mt-px mr-[2px] flex-1 bg-white">
        <h2 className="flex h-[35px] justify-end overflow-hidden border-b border-[#b0c4de] bg-linear-to-b from-white to-[#e1e8f2] pr-[20px] font-bold leading-[34px] whitespace-nowrap text-[#0078d7]">
          ESH_Action_EcuMGoToSelectedShutdownTa...swMConfig/BswMModeControl/BswMAction)
        </h2>
        <div className="flex">
          <div className="h-[11px] w-[77px] border-r border-b border-[#a0a0a0] bg-[#f0f0f0]" />
          <p className="pt-[5px] pl-[5px] whitespace-nowrap">Each container of this type defines an action. These actions can be part of one or</p>
        </div>
      </div>
    </section>
  );
}

function ValidationPanel() {
  return (
    <section className="flex min-w-0 flex-1 flex-col rounded-tl border-t border-l border-[#a0a0a0]">
      <div className="flex h-[29px] shrink-0 items-stretch">
        <div className="flex w-[137px] items-center rounded-tr border-r border-[#a0a0a0] bg-linear-to-b from-white to-[#f0f0f0] pb-[2px] pl-[3px]">
          <button type="button" className="flex items-center gap-[4px]"><ValidationIcon />Validation</button>
          <IconButton label="Close Validation" className="ml-2"><CloseX /></IconButton>
        </div>
        <button type="button" className="flex w-[222px] items-center gap-[4px] border-r border-b border-[#a0a0a0] pl-[4px] whitespace-nowrap">
          <UnresolvedIcon />Unresolved References
        </button>
        <div className="flex flex-1 items-start justify-end gap-[7px] overflow-hidden border-b border-[#a0a0a0] pt-[3px] pr-[2px]">
          <IconButton label="Suggestions"><BulbIcon /></IconButton>
          <IconButton label="Generator errors"><GearErrorIcon /></IconButton>
          <IconButton label="Synchronize"><SwapIcon /></IconButton>
          <Divider />
          <IconButton label="Clear results"><CheckErrorIcon /></IconButton>
          <IconButton label="Filter results"><FilterCheckIcon /></IconButton>
          <Divider />
          <IconButton label="Errors" className="ml-[3px] h-4"><ErrorIcon /></IconButton>
          <IconButton label="Warnings" className="ml-[4px] h-4"><WarningIcon /></IconButton>
          <IconButton label="Information" className="ml-[4px] h-4"><InfoIcon /></IconButton>
          <IconButton label="Validation view menu" className="ml-[11px] h-[11px]"><ViewMenuIcon /></IconButton>
        </div>
      </div>
      <p className="ml-[2px] h-[32px] shrink-0 border-b border-[#a0a0a0] pl-[2px] leading-[26px]">31 messages in 8 categories</p>
      <table className="ml-[2px] w-full table-fixed border-t border-white text-left">
        <thead>
          <tr>
            <th className="h-[48px] w-[374px] border-r border-[#a0a0a0] pl-[6px] font-normal">ID</th>
            <th className="pl-[6px] font-normal">Message</th>
          </tr>
        </thead>
      </table>
    </section>
  );
}

export default function App() {
  return (
    <div className="flex h-screen flex-col overflow-hidden bg-[#f0f0f0] font-['Noto_Sans',sans-serif] text-[18px] leading-6 text-black">
      <MenuBar />
      <ToolBar />
      <main className="flex min-h-0 flex-1 gap-1">
        <ConfigurationEditors />
        <BswEditor />
      </main>
      <div className="mt-1 flex h-[84px] shrink-0 gap-1">
        <PropertiesPanel />
        <ValidationPanel />
      </div>
    </div>
  );
}
